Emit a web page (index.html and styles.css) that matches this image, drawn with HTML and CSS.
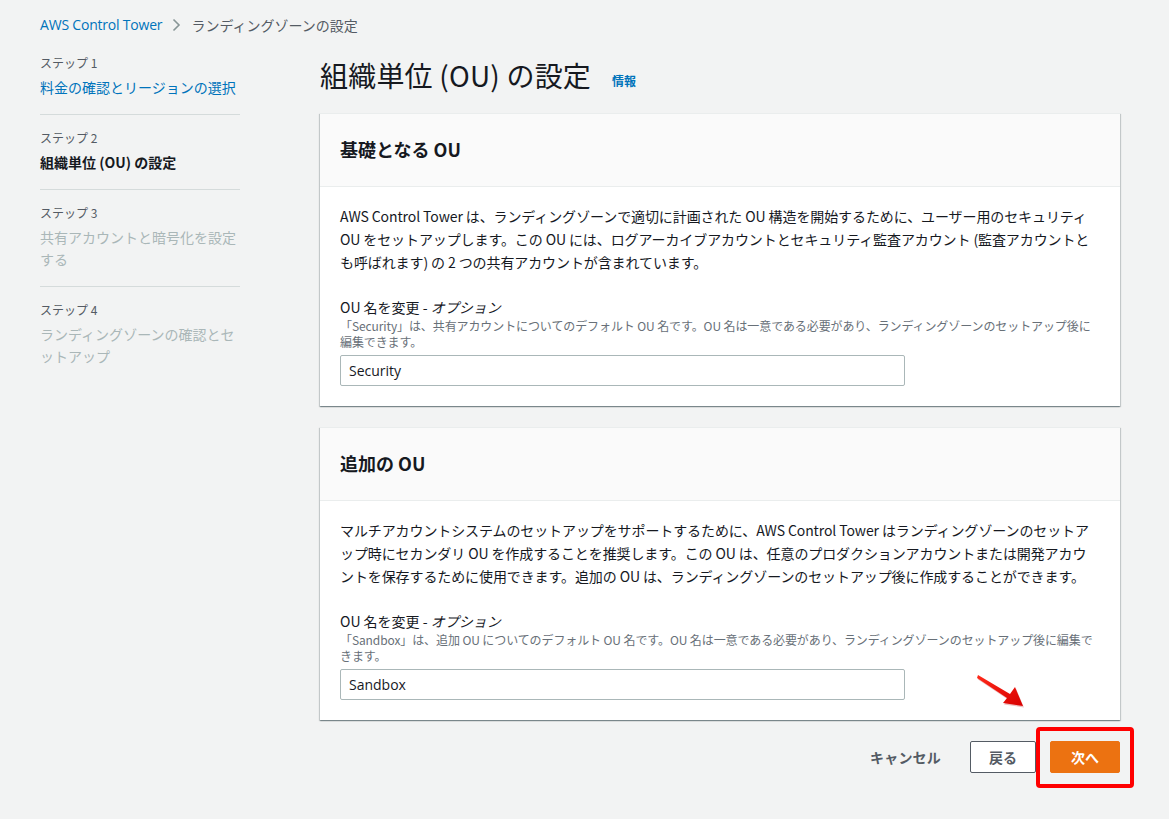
FILE: index.html
```html
<!DOCTYPE html>
<html lang="ja">
<head>
<meta charset="utf-8">
<title>ランディングゾーンの設定</title>
<link rel="stylesheet" href="styles.css">
</head>
<body>
<div class="page">
  <nav class="breadcrumb">
    <a class="crumb-link">AWS Control Tower</a>
    <svg class="crumb-sep" width="16" height="16" viewBox="0 0 16 16"><path d="M5.5 2.5 L11 8 L5.5 13.5" fill="none" stroke="#879596" stroke-width="1.6"/></svg>
    <span class="crumb-current">ランディングゾーンの設定</span>
  </nav>
  <div class="layout">
    <aside class="steps">
      <div class="step">
        <div class="step-label">ステップ 1</div>
        <div class="step-title link">料金の確認とリージョンの選択</div>
      </div>
      <div class="step">
        <div class="step-label">ステップ 2</div>
        <div class="step-title current">組織単位 (OU) の設定</div>
      </div>
      <div class="step">
        <div class="step-label">ステップ 3</div>
        <div class="step-title disabled">共有アカウントと暗号化を設定する</div>
      </div>
      <div class="step last">
        <div class="step-label">ステップ 4</div>
        <div class="step-title disabled">ランディングゾーンの確認とセットアップ</div>
      </div>
    </aside>
    <main class="main">
      <div class="title-row">
        <h1 class="page-title">組織単位 (OU) の設定</h1>
        <a class="info">情報</a>
      </div>
      <section class="card">
        <div class="card-header"><h2>基礎となる OU</h2></div>
        <div class="card-body">
          <p class="desc">AWS Control Tower は、ランディングゾーンで適切に計画された OU 構造を開始するために、ユーザー用のセキュリティ OU をセットアップします。この OU には、ログアーカイブアカウントとセキュリティ監査アカウント (監査アカウントとも呼ばれます) の 2 つの共有アカウントが含まれています。</p>
          <div class="field">
            <div class="field-label">OU 名を変更 - <i>オプション</i></div>
            <div class="field-hint">「Security」は、共有アカウントについてのデフォルト OU 名です。OU 名は一意である必要があり、ランディングゾーンのセットアップ後に編集できます。</div>
            <div class="input">Security</div>
          </div>
        </div>
      </section>
      <section class="card">
        <div class="card-header"><h2>追加の OU</h2></div>
        <div class="card-body">
          <p class="desc">マルチアカウントシステムのセットアップをサポートするために、AWS Control Tower はランディングゾーンのセットアップ時にセカンダリ OU を作成することを推奨します。この OU は、任意のプロダクションアカウントまたは開発アカウントを保存するために使用できます。追加の OU は、ランディングゾーンのセットアップ後に作成することができます。</p>
          <div class="field">
            <div class="field-label">OU 名を変更 - <i>オプション</i></div>
            <div class="field-hint">「Sandbox」は、追加 OU についてのデフォルト OU 名です。OU 名は一意である必要があり、ランディングゾーンのセットアップ後に編集できます。</div>
            <div class="input">Sandbox</div>
          </div>
        </div>
      </section>
      <div class="actions">
        <span class="btn btn-link">キャンセル</span>
        <span class="btn btn-normal">戻る</span>
        <span class="btn btn-primary">次へ</span>
      </div>
      <svg class="arrow" width="60" height="46" viewBox="0 0 60 46">
        <defs>
          <linearGradient id="ag" x1="0" y1="0" x2="1" y2="1">
            <stop offset="0" stop-color="#ff2a1a"/>
            <stop offset="1" stop-color="#d80000"/>
          </linearGradient>
        </defs>
        <polygon points="8,7 40,26 45,19 53,38 33,35 37,30 7,10" fill="#b00" opacity="0.25" transform="translate(1,1.5)"/>
        <polygon points="8,7 40,26 45,19 53,38 33,35 37,30 7,10" fill="url(#ag)"/>
      </svg>
    </main>
  </div>
</div>
</body>
</html>
```

FILE: styles.css
```css
* { box-sizing: border-box; }
html, body { margin: 0; padding: 0; }
body {
  background: #f2f3f3;
  color: #16191f;
  font-family: "Open Sans", "Noto Sans CJK JP", sans-serif;
  font-size: 14px;
  width: 1169px;
  height: 819px;
  overflow: hidden;
}
.page { padding: 15px 0 0 40px; }
.breadcrumb {
  display: flex;
  align-items: center;
  height: 20px;
  line-height: 20px;
  font-size: 14px;
}
.crumb-link { color: #0073bb; font-family: "Open Sans", "Noto Sans CJK JP", sans-serif; letter-spacing: -0.2px; }
.crumb-sep { margin: 0 7px 0 6px; }
.crumb-current { color: #545b64; font-family: "Noto Sans CJK JP", sans-serif; }

.layout {
  display: flex;
  gap: 80px;
  margin-top: 19px;
}
.steps { width: 200px; flex: none; }
.step {
  padding: 0 0 16px;
  border-bottom: 1px solid #d5dbdb;
  margin-bottom: 14px;
}
.step.last { border-bottom: none; }
.step-label {
  font-size: 12px;
  line-height: 18px;
  color: #545b64;
  font-family: "Noto Sans CJK JP", sans-serif;
}
.step-title {
  margin-top: 4px;
  font-size: 14px;
  line-height: 22px;
  font-family: "Noto Sans CJK JP", sans-serif;
}
.step-title.link { color: #0073bb; }
.step-title.current { color: #16191f; font-weight: 700; }
.step-title.disabled { color: #aab7b8; }

.main { width: 800px; position: relative; }
.title-row {
  display: flex;
  align-items: center;
  margin-top: 3px;
  height: 36px;
}
.page-title {
  margin: 0;
  font-size: 28px;
  line-height: 36px;
  font-weight: 400;
  color: #16191f;
  font-family: "Noto Sans CJK JP", sans-serif;
  letter-spacing: 0.2px;
}
.info {
  margin-left: 21px;
  margin-top: 10px;
  font-size: 12px;
  font-weight: 700;
  color: #0073bb;
  font-family: "Noto Sans CJK JP", sans-serif;
}

.card {
  margin-top: 20px;
  background: #fff;
  border-top: 1px solid #eaeded;
  box-shadow: 0 1px 1px 0 rgba(0,28,36,.3), 1px 1px 1px 0 rgba(0,28,36,.15), -1px 1px 1px 0 rgba(0,28,36,.15);
}
.card + .card { margin-top: 21px; }
.card-header {
  background: #fafafa;
  border-bottom: 1px solid #eaeded;
  padding: 23px 20px 24px;
}
.card-header h2 {
  margin: 0;
  font-size: 18px;
  line-height: 25px;
  font-weight: 700;
  font-family: "Noto Sans CJK JP", sans-serif;
}
.card-body { padding: 18px 20px 20px; }
.desc {
  margin: 0;
  font-size: 14px;
  line-height: 23px;
  font-family: "Noto Sans CJK JP", sans-serif;
  letter-spacing: -0.1px;
}
.field { margin-top: 23px; }
.field-label {
  font-size: 14px;
  line-height: 20px;
  font-family: "Noto Sans CJK JP", sans-serif;
}
.field-label i { font-style: italic; }
.field-hint {
  margin-top: 1px;
  font-size: 12px;
  line-height: 16px;
  color: #687078;
  font-family: "Noto Sans CJK JP", sans-serif;
  letter-spacing: -0.1px;
}
.input {
  margin-top: 5px;
  width: 565px;
  height: 31px;
  border: 1px solid #aab7b8;
  border-radius: 2px;
  padding: 0 8px;
  line-height: 29px;
  font-size: 14px;
  color: #16191f;
  font-family: "Open Sans", "Noto Sans CJK JP", sans-serif;
}

.actions {
  display: flex;
  justify-content: flex-end;
  align-items: center;
  margin-top: 21px;
}
.btn {
  height: 32px;
  line-height: 30px;
  font-size: 14px;
  font-weight: 700;
  font-family: "Noto Sans CJK JP", sans-serif;
  border-radius: 2px;
  border: 1px solid transparent;
}
.btn-link { color: #545b64; padding: 0 20px 0 10px; margin-right: 8px; letter-spacing: 0.2px; }
.btn-normal {
  color: #545b64;
  background: #fff;
  border-color: #545b64;
  padding: 0 18px;
  margin-right: 14px;
}
.btn-primary {
  position: relative;
  color: #fff;
  background: #ec7211;
  border-color: #ec7211;
  padding: 0 20px;
}
.btn-primary::after {
  content: "";
  position: absolute;
  left: -15px;
  right: -15px;
  top: -15px;
  bottom: -16px;
  border: 4px solid #ff0000;
  border-radius: 4px;
}
.arrow {
  position: absolute;
  left: 650px;
  top: 614px;
}
```
